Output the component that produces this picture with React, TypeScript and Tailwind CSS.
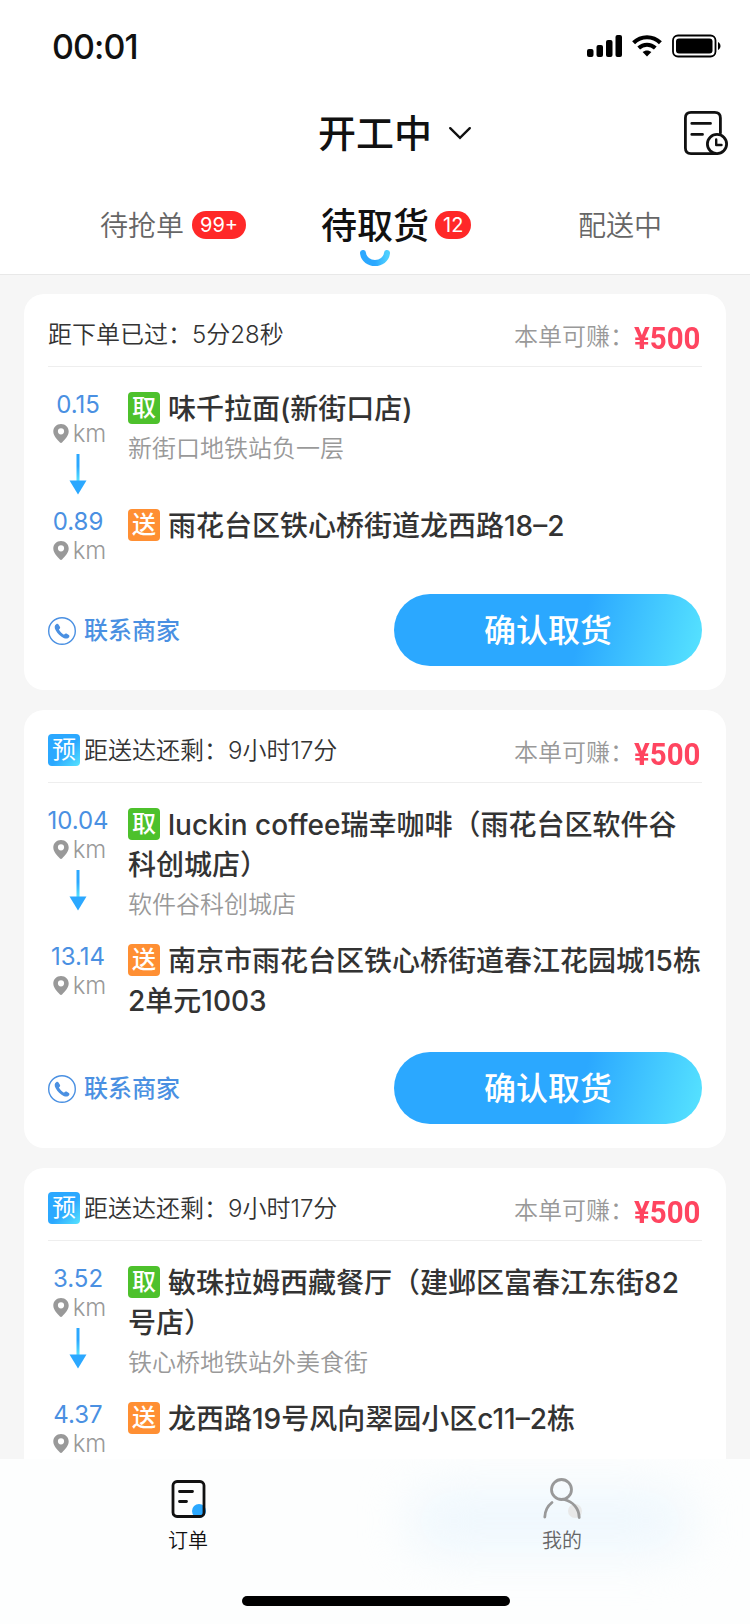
import React, { useState } from 'react';

interface Order {
  id: number;
  reserved: boolean;
  label: string;
  time: string;
  price: number;
  shopDistance: string;
  shopName: string;
  shopAddress: string;
  targetDistance: string;
  target: string;
}

const orders: Order[] = [
  {
    id: 1,
    reserved: false,
    label: '距下单已过：',
    time: '5分28秒',
    price: 500,
    shopDistance: '0.15',
    shopName: '味千拉面(新街口店)',
    shopAddress: '新街口地铁站负一层',
    targetDistance: '0.89',
    target: '雨花台区铁心桥街道龙西路18–2',
  },
  {
    id: 2,
    reserved: true,
    label: '距送达还剩：',
    time: '9小时17分',
    price: 500,
    shopDistance: '10.04',
    shopName: 'luckin coffee瑞幸咖啡（雨花台区软件谷科创城店）',
    shopAddress: '软件谷科创城店',
    targetDistance: '13.14',
    target: '南京市雨花台区铁心桥街道春江花园城15栋2单元1003',
  },
  {
    id: 3,
    reserved: true,
    label: '距送达还剩：',
    time: '9小时17分',
    price: 500,
    shopDistance: '3.52',
    shopName: '敏珠拉姆西藏餐厅（建邺区富春江东街82号店）',
    shopAddress: '铁心桥地铁站外美食街',
    targetDistance: '4.37',
    target: '龙西路19号风向翠园小区c11–2栋',
  },
];

const StatusBar: React.FC = () => (
  <div className="h-[92px] shrink-0 flex items-center justify-between pl-[52px] pr-[29px] text-black">
    <span className="pt-[2px] text-[34px] leading-none font-medium text-[#111] tracking-[-0.9px]">
      00:01
    </span>
    <div className="flex items-center gap-[10px]">
      <svg width="35" height="22" viewBox="0 0 35 22" fill="currentColor">
        <rect x="0" y="14" width="6.5" height="8" rx="2" />
        <rect x="9.5" y="10" width="6.5" height="12" rx="2" />
        <rect x="19" y="5" width="6.5" height="17" rx="2" />
        <rect x="28.5" y="0" width="6.5" height="22" rx="2" />
      </svg>
      <svg width="30" height="22" viewBox="0 0 30 22" fill="none">
        <path
          d="M1.6 7.8C9.2 0.4 20.8 0.4 28.4 7.8"
          stroke="currentColor"
          strokeWidth="4.2"
        />
        <path
          d="M6.7 13C11.4 8.6 18.6 8.6 23.3 13"
          stroke="currentColor"
          strokeWidth="4"
        />
        <path
          d="M10.6 17.1C13.1 14.9 16.9 14.9 19.4 17.1L15 21.6Z"
          fill="currentColor"
        />
      </svg>
      <svg width="49" height="24" viewBox="0 0 49 24" fill="none">
        <rect
          x="1"
          y="1.5"
          width="42.5"
          height="21"
          rx="5"
          stroke="currentColor"
          strokeWidth="1.8"
        />
        <rect x="4" y="4.5" width="36.5" height="15" rx="3" fill="currentColor" />
        <path d="M46 8C49.3 9.5 49.3 14.5 46 16Z" fill="currentColor" />
      </svg>
    </div>
  </div>
);

const Header: React.FC = () => (
  <div className="h-[82px] shrink-0 grid grid-cols-[1fr_auto_1fr] items-center pr-[22px] text-[#111]">
    <span />
    <button type="button" className="flex items-center gap-[16px] pl-[62px]">
      <span className="pb-[1px] text-[38px] leading-none font-medium">开工中</span>
      <svg className="mb-[1px]" width="24" height="14" viewBox="0 0 24 14" fill="none">
        <path
          d="M2.2 2.2L12 11.8L21.8 2.2"
          stroke="currentColor"
          strokeWidth="2.4"
          strokeLinecap="round"
        />
      </svg>
    </button>
    <button type="button" className="justify-self-end">
      <svg width="44" height="44" viewBox="0 0 44 44" fill="none">
        <g stroke="currentColor" strokeWidth="2.8" strokeLinecap="round">
          <path d="M36.4 22V7Q36.4 1.4 30.8 1.4H7Q1.4 1.4 1.4 7V37Q1.4 42.6 7 42.6H33" />
          <path d="M7.8 12.4H26.5M7.8 23.4H18.5" />
          <circle cx="33" cy="33" r="9.6" fill="#fff" />
          <path d="M32.2 28.5V34H37.5" strokeWidth="2.4" strokeLinejoin="round" />
        </g>
      </svg>
    </button>
  </div>
);

const Badge: React.FC<{ text: string }> = ({ text }) => (
  <span className="h-7 px-2 rounded-full bg-[#ff2828] text-white text-[20px] leading-7 font-normal">
    {text}
  </span>
);

const Tabs: React.FC = () => (
  <div className="h-[101px] shrink-0 flex items-start border-b border-[#e8e8e8] pt-[27px] text-[28px] text-[#666] font-[350]">
    <button type="button" className="w-[300px] h-[48px] pl-[100px] flex items-center gap-2">
      <span className="pt-[2px]">待抢单</span>
      <Badge text="99+" />
    </button>
    <button
      type="button"
      className="w-[200px] h-[48px] pl-[21px] flex items-center gap-[6px] relative"
    >
      <span className="pt-[2px] text-[36px] font-medium text-[#111]">待取货</span>
      <Badge text="12" />
      <svg
        className="absolute left-[60px] top-[49px]"
        width="30"
        height="17"
        viewBox="0 0 30 17"
        fill="none"
      >
        <defs>
          <linearGradient id="smile" x1="0" y1="0" x2="1" y2="0">
            <stop offset="0.5" stopColor="#2ba8ff" />
            <stop offset="1" stopColor="#4dcfff" />
          </linearGradient>
        </defs>
        <path
          d="M3 3C4.5 16.3 25.5 16.3 27 3"
          stroke="url(#smile)"
          strokeWidth="6"
          strokeLinecap="round"
        />
      </svg>
    </button>
    <button
      type="button"
      className="w-[240px] h-[48px] pt-[2px] flex items-center justify-center"
    >
      配送中
    </button>
  </div>
);

const Distance: React.FC<{ value: string }> = ({ value }) => (
  <>
    <span className="text-[24px] leading-[30px] text-[#4a90e2]">{value}</span>
    <span className="ml-[3px] flex items-center gap-[4px] text-[24px] leading-[28px] font-[350] text-[#999]">
      <svg className="mb-[1px]" width="16" height="19" viewBox="0 0 16 19" fill="#999">
        <path
          fillRule="evenodd"
          d="M8 0C3.5 0 0.3 3.3 0.3 7.5C0.3 12 4.6 16 6.7 18.3Q8 19.6 9.3 18.3C11.4 16 15.7 12 15.7 7.5C15.7 3.3 12.5 0 8 0ZM8 4.2A3.1 3.1 0 1 1 8 10.4A3.1 3.1 0 1 1 8 4.2Z"
        />
      </svg>
      km
    </span>
  </>
);

const Arrow: React.FC = () => (
  <svg className="mt-[5px]" width="18" height="42" viewBox="0 0 18 42">
    <defs>
      <linearGradient id="arrow" x1="0" y1="0" x2="0" y2="1">
        <stop offset="0.45" stopColor="#2ba8ff" />
        <stop offset="1" stopColor="#57e4ff" />
      </linearGradient>
    </defs>
    <rect x="7.5" y="1" width="3" height="27" fill="url(#arrow)" />
    <path d="M0.5 27.5H17.5L9 41.5Z" fill="#2ba8ff" />
  </svg>
);

const OrderCard: React.FC<{ order: Order }> = ({ order }) => (
  <div className="shrink-0 bg-white rounded-[20px] px-6 pb-6">
    <div className="h-[73px] flex items-center justify-between border-b border-[#eee]">
      <div className="flex items-center gap-1 pt-2">
        {order.reserved && (
          <span className="w-8 h-8 rounded-[4px] bg-[linear-gradient(135deg,#2ba8ff_55%,#57e4ff)] text-white text-[24px] leading-8 text-center">
            预
          </span>
        )}
        <span className="pt-[2px] text-[24px] leading-8 text-[#333] font-[350]">
          {order.label}
          {order.time}
        </span>
      </div>
      <div className="flex items-center pt-[13px]">
        <span className="text-[24px] leading-8 font-[350] text-[#999]">本单可赚：</span>
        <span className="w-[68px] pt-[2px] origin-left scale-x-[0.92] font-[Roboto] font-bold text-[32px] leading-8 text-[#ff4560]">
          ¥{order.price}
        </span>
      </div>
    </div>

    <div className="pt-[21px]">
      <div className="flex min-h-[117px]">
        <div className="w-[60px] flex flex-col items-center pt-[2px]">
          <Distance value={order.shopDistance} />
          <Arrow />
        </div>
        <div className="flex-1 ml-5 pb-[15px]">
          <p className="pt-px text-[28px] leading-10 font-medium text-[#333] break-all">
            <span className="inline-block w-8 h-8 mr-2 mt-[3px] align-top rounded-[4px] bg-[#4dc12c] text-white text-[24px] leading-8 text-center">
              取
            </span>
            {order.shopName}
          </p>
          <p className="text-[24px] leading-10 font-[350] text-[#999]">
            {order.shopAddress}
          </p>
        </div>
      </div>
      <div className="flex min-h-[57px]">
        <div className="w-[60px] h-[57px] flex flex-col items-center pt-[2px]">
          <Distance value={order.targetDistance} />
        </div>
        <p className="flex-1 ml-5 pt-px -mb-px text-[28px] leading-10 font-medium text-[#333] break-all">
          <span className="inline-block w-8 h-8 mr-2 mt-[3px] align-top rounded-[4px] bg-[#ff8f33] text-white text-[24px] leading-8 text-center">
            送
          </span>
          {order.target}
        </p>
      </div>
    </div>

    <div className="mt-8 flex items-center justify-between">
      <button
        type="button"
        className="pt-[2px] flex items-center gap-2 text-[24px] font-medium text-[#4a90e2]"
      >
        <svg width="28" height="28" viewBox="0 0 28 28" fill="none">
          <circle cx="14" cy="14" r="13.3" stroke="currentColor" strokeWidth="1.4" />
          <path
            d="M8.2 7.2C6.3 8.4 6.2 10.7 7.7 13.2C9.6 16.6 12.3 19.3 15.6 20.9C18 22 20 21.8 21.2 19.9C21.6 19.2 21.5 18.5 20.8 18L18.5 16.6C17.8 16.2 17.2 16.4 16.7 16.9L16 17.7C14 16.7 11.9 14.5 10.9 12.4L11.7 11.7C12.2 11.2 12.3 10.5 11.9 9.8L10.5 7.5C10 6.7 9.1 6.6 8.2 7.2Z"
            fill="currentColor"
          />
        </svg>
        联系商家
      </button>
      <button
        type="button"
        className="w-[308px] h-[72px] pt-[2px] rounded-full bg-[linear-gradient(105deg,#2ba8ff_60%,#57e4ff)] text-white text-[32px] font-medium"
      >
        确认取货
      </button>
    </div>
  </div>
);

const TabBar: React.FC<{ active: string; onChange: (tab: string) => void }> = ({
  active,
  onChange,
}) => (
  <div className="relative h-[165px] shrink-0 overflow-hidden bg-[#fdfefe]">
    <div className="absolute left-[410px] top-[30px] w-[280px] h-[64px] rounded-full bg-[#eef7fd] blur-[24px]" />
    <div className="relative h-[137px] flex">
      <button
        type="button"
        className="flex-1 flex flex-col items-center pt-[20px] text-[#111]"
        onClick={() => onChange('orders')}
      >
        <svg className="ml-[2px]" width="36" height="40" viewBox="0 0 36 40" fill="none">
          <circle cx="28" cy="32" r="7" fill="#2ba8ff" />
          <rect
            x="2"
            y="2.5"
            width="31"
            height="35"
            rx="4"
            stroke="currentColor"
            strokeWidth="2.8"
          />
          <path
            d="M8.5 12.5H21.5M8.5 22.5H15.5"
            stroke="currentColor"
            strokeWidth="2.8"
            strokeLinecap="round"
          />
        </svg>
        <span className="mt-[7px] ml-[1px] text-[20px] leading-[30px] font-[350]">订单</span>
      </button>
      <button
        type="button"
        className={
          active === 'mine'
            ? 'flex-1 flex flex-col items-center pt-[18px] text-[#111]'
            : 'flex-1 flex flex-col items-center pt-[18px] text-[#666]'
        }
        onClick={() => onChange('mine')}
      >
        <svg className="mr-[1px]" width="40" height="42" viewBox="0 0 40 42" fill="none">
          <circle cx="33" cy="34" r="7" fill="#e8e8e8" />
          <g stroke="#999" strokeWidth="2.8" strokeLinecap="round">
            <circle cx="19.5" cy="12.5" r="10" />
            <path d="M10 25.5C5.5 29 3 34 2.8 40" />
            <path d="M22 22.5C31 24.5 37 31.5 37.2 40.5" />
          </g>
        </svg>
        <span className="mt-[7px] mr-[1px] text-[20px] leading-[30px] font-[350]">我的</span>
      </button>
    </div>
    <div className="relative mx-auto w-[268px] h-[10px] rounded-full bg-black left-[1px]" />
  </div>
);

const App: React.FC = () => {
  const [active, setActive] = useState<string>('orders');

  return (
    <div className="w-[750px] h-[1624px] overflow-hidden flex flex-col bg-white font-[Inter,'Noto_Sans_CJK_SC',sans-serif]">
      <StatusBar />
      <Header />
      <Tabs />
      <div className="flex-1 min-h-0 overflow-hidden flex flex-col gap-5 bg-[#f6f6f6] px-6 pt-[19px]">
        {orders.map(order => (
          <OrderCard key={order.id} order={order} />
        ))}
      </div>
      <TabBar active={active} onChange={setActive} />
    </div>
  );
};

export default App;
